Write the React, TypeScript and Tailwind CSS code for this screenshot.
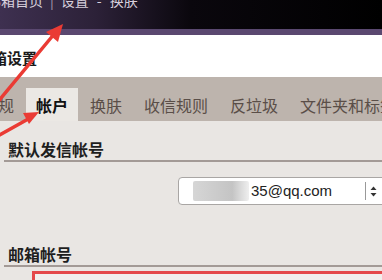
export default function App() {
  const font = { fontFamily: '"Noto Sans CJK SC", "Liberation Sans", sans-serif' };
  return (
    <div className="relative w-[382px] h-[280px] overflow-hidden bg-[#e9e6e3]" style={font}>
      {/* top bar */}
      <div className="h-[29px] bg-[linear-gradient(90deg,#3e3050_0%,#2c2138_25%,#0a070d_50%,#000_100%)] relative overflow-hidden">
        <div className="absolute left-[-13px] top-[-10px] flex items-center text-[14px] leading-[20px] text-[#d8d0dc] whitespace-nowrap">
          <span>邮箱首页</span>
          <span className="mx-[7px] text-[#a99cb0]">|</span>
          <span>设置</span>
          <span className="mx-[8px]">-</span>
          <span>换肤</span>
        </div>
      </div>
      <div className="h-[6px] bg-[#5a4870]" />
      {/* title */}
      <div className="h-[42px] bg-white flex items-center">
        <span className="ml-[-23px] text-[15px] leading-[20px] font-semibold text-[#1a1a1a] mt-[3px]">邮箱设置</span>
      </div>
      {/* tab bar */}
      <div className="h-[44px] bg-[#bdb4ad] flex items-end text-[16px] leading-[20px] whitespace-nowrap">
        <div className="h-[33px] flex items-center ml-[-18px] pr-[12px] text-[#5a4e48]">常规</div>
        <div className="h-[33px] flex items-center px-[10px] bg-[#ebe8e4] text-[#111] font-bold">帐户</div>
        <div className="h-[33px] flex items-center pl-[12px] pr-[11px] text-[#5a4e48]">换肤</div>
        <div className="h-[33px] flex items-center px-[11px] text-[#5a4e48]">收信规则</div>
        <div className="h-[33px] flex items-center px-[11px] text-[#5a4e48]">反垃圾</div>
        <div className="h-[33px] flex items-center px-[11px] text-[#5a4e48]">文件夹和标签</div>
      </div>
      {/* content */}
      <div className="pt-[18px]">
        <div className="ml-[4px] border-b-2 border-[#a39a96] pb-[1px] text-[16px] leading-[20px]">
          <span className="ml-[4px] font-semibold text-[#1e1e1e]">默认发信帐号</span>
        </div>
        <div className="flex justify-end mt-[15px]">
          <div className="w-[214px] mr-[-10px] h-[28px] rounded-[4px] border border-[#a9a6a4] bg-white flex items-center">
            <div className="ml-[14px] w-[56px] h-[20px] bg-[linear-gradient(90deg,#d6d6d6,#c4c4c4_70%,#efefef)] rounded-[2px]" />
            <span className="ml-[2px] text-[15px] leading-[20px] text-[#222]" style={{ fontFamily: '"Liberation Sans", sans-serif' }}>35@qq.com</span>
            <div className="ml-auto mr-[14px] flex items-center h-[18px]">
              <div className="w-px h-[18px] bg-[#999] mr-[4px]" />
              <svg width="7" height="11" viewBox="0 0 7 11">
                <path d="M3.5 0.5 L6.5 4 L0.5 4 Z" fill="#333" />
                <path d="M3.5 10.5 L6.5 7 L0.5 7 Z" fill="#333" />
              </svg>
            </div>
          </div>
        </div>
        <div className="ml-[4px] mt-[39px] border-b-2 border-[#a39a96] pb-[1px] text-[16px] leading-[20px]">
          <span className="ml-[4px] font-semibold text-[#1e1e1e]">邮箱帐号</span>
        </div>
        <div className="ml-[32px] mt-[4px] h-[30px] border-[3px] border-[#e4484a] border-r-0 bg-[#f1eeec]" />
      </div>
      {/* arrows overlay */}
      <svg className="absolute left-0 top-0 pointer-events-none" width="382" height="280" viewBox="0 0 382 280">
        <line x1="-4" y1="104" x2="55" y2="33" stroke="#ea3b34" strokeWidth="3.5" strokeLinecap="round" />
        <path d="M63 24 L46 32 L58 42 Z" fill="#ea3b34" />
        <line x1="-4" y1="137" x2="30" y2="118" stroke="#ea3b34" strokeWidth="3.5" strokeLinecap="round" />
        <path d="M39 112 L23 113 L29 124 Z" fill="#ea3b34" />
      </svg>
    </div>
  );
}
